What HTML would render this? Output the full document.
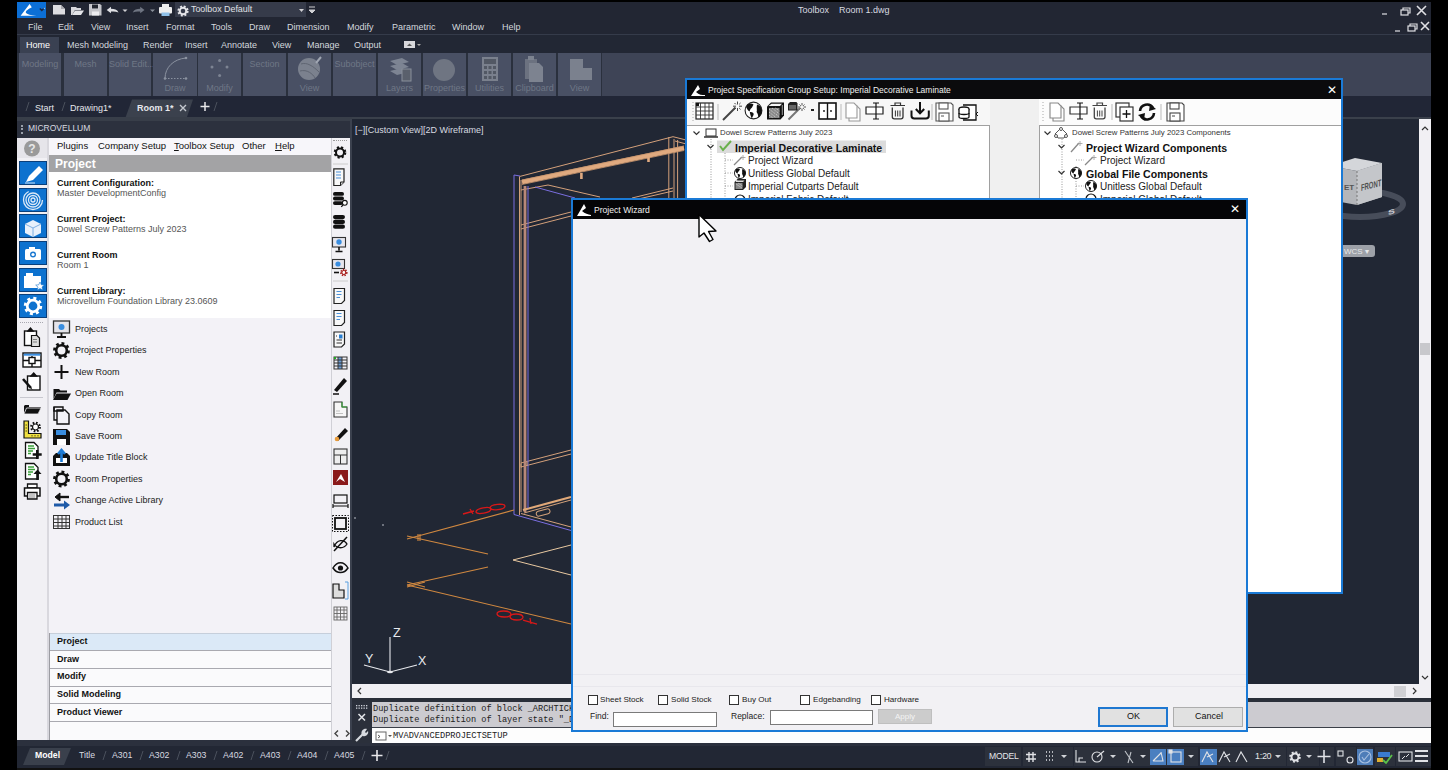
<!DOCTYPE html>
<html><head><meta charset="utf-8">
<style>
*{margin:0;padding:0;box-sizing:border-box}
html,body{width:1448px;height:770px;overflow:hidden;background:#000;font-family:"Liberation Sans",sans-serif}
.a{position:absolute}
.t{position:absolute;white-space:nowrap;line-height:1}
#app{position:absolute;left:17px;top:2px;width:1414px;height:767px;background:#222633;overflow:hidden}
.menu .t{color:#d4d8de;font-size:9px;top:23px}
.rtab .t{color:#d4d8de;font-size:9px;top:41px}
.rp{position:absolute;top:53px;height:43px;background:#495064}
.rp .t{color:#6f7786;font-size:9px;width:100%;text-align:center}
.dt .t{color:#e6e8ec;font-size:9px;top:104px}

.bb{left:19px;width:28px;height:24px;background:#0d72cf;border:1px solid #0a3f7a}
.pm .t{top:141px;font-size:9.5px;color:#111}
.cur .t{left:57px;font-size:9px}
.cur .b{font-weight:bold;color:#111}
.cur .g{color:#555}
.li .t{left:75px;font-size:9px;color:#222}
.acl{left:49px;width:282px;height:1px;background:#a9a9b0}
.ac .t{left:57px;font-size:9px;font-weight:bold;color:#111}

.tr .s{font-size:7.8px;color:#333}
.tr .bld{font-size:10.6px;font-weight:bold;color:#111}
.tr .n{font-size:10px;color:#222}
.ck .t{top:696px;font-size:8.1px;color:#222}
.cb{top:695px;width:10px;height:10px;background:#fff;border:1px solid #333}
.stt .t{top:751px;font-size:8.7px;color:#d8dbe0}
</style></head><body>
<div id="app"></div>
<!-- title row -->
<div class="a" style="left:17px;top:2px;width:1414px;height:16px;background:#222633"></div>
<div class="a" style="left:17px;top:2px;width:29px;height:16px;background:#0c6fd6"></div>
<!-- menu row -->
<div class="a menu" style="left:17px;top:18px;width:1414px;height:17px;background:#222633;border-bottom:1px solid #353b4a"></div>
<div class="menu">
<span class="t" style="left:28px">File</span>
<span class="t" style="left:58px">Edit</span>
<span class="t" style="left:91px">View</span>
<span class="t" style="left:126px">Insert</span>
<span class="t" style="left:166px">Format</span>
<span class="t" style="left:211px">Tools</span>
<span class="t" style="left:249px">Draw</span>
<span class="t" style="left:287px">Dimension</span>
<span class="t" style="left:347px">Modify</span>
<span class="t" style="left:392px">Parametric</span>
<span class="t" style="left:452px">Window</span>
<span class="t" style="left:502px">Help</span>
</div>
<!-- ribbon tabs -->
<div class="a" style="left:17px;top:35px;width:1414px;height:18px;background:#222734"></div>
<div class="a" style="left:20px;top:37px;width:39px;height:16px;background:#3a4152"></div>
<div class="rtab">
<span class="t" style="left:26px;color:#fff">Home</span>
<span class="t" style="left:67px">Mesh Modeling</span>
<span class="t" style="left:143px">Render</span>
<span class="t" style="left:185px">Insert</span>
<span class="t" style="left:221px">Annotate</span>
<span class="t" style="left:272px">View</span>
<span class="t" style="left:307px">Manage</span>
<span class="t" style="left:354px">Output</span>
</div>
<!-- ribbon panels -->
<div class="a" style="left:17px;top:53px;width:1414px;height:43px;background:#2a303d"></div>
<div class="a" style="left:602px;top:53px;width:829px;height:43px;background:#3e4456"></div>
<div class="rp" style="left:19px;width:42px"><span class="t" style="top:7px">Modeling</span></div>
<div class="rp" style="left:64px;width:43px"><span class="t" style="top:7px">Mesh</span></div>
<div class="rp" style="left:109px;width:42px"><span class="t" style="top:7px">Solid Edit...</span></div>
<div class="rp" style="left:153px;width:44px"><span class="t" style="top:31px">Draw</span></div>
<div class="rp" style="left:198px;width:43px"><span class="t" style="top:31px">Modify</span></div>
<div class="rp" style="left:243px;width:43px"><span class="t" style="top:7px">Section</span></div>
<div class="rp" style="left:288px;width:43px"><span class="t" style="top:31px">View</span></div>
<div class="rp" style="left:333px;width:43px"><span class="t" style="top:7px">Subobject</span></div>
<div class="rp" style="left:378px;width:43px"><span class="t" style="top:31px">Layers</span></div>
<div class="rp" style="left:423px;width:43px"><span class="t" style="top:31px">Properties</span></div>
<div class="rp" style="left:468px;width:43px"><span class="t" style="top:31px">Utilities</span></div>
<div class="rp" style="left:513px;width:43px"><span class="t" style="top:31px">Clipboard</span></div>
<div class="rp" style="left:558px;width:43px"><span class="t" style="top:31px">View</span></div>
<!-- doc tabs -->
<div class="a" style="left:17px;top:96px;width:1414px;height:21px;background:#212636"></div>


<!-- QAT icons -->
<svg class="a" style="left:17px;top:2px" width="300" height="16" viewBox="0 0 300 16">
 <path d="M3.6 13.8 L12.6 2 L14.8 5.3 C11.5 7,8.5 9,8.8 10.5 C10 12.6,14 13.2,19.5 13.8Z" fill="#fff"/>
 <path d="M22.8 6.5 L24.8 8.5 L26.8 6.5" stroke="#1a2a48" stroke-width="1.4" fill="none"/><circle cx="27.3" cy="6.3" r=".6" fill="#cde"/>
 <path d="M36 3 H44 L48 7 V12.5 H36Z" fill="#dcdce0"/><path d="M44 3 V7 H48Z" fill="#a8a8ae"/>
 <path d="M54 5 H59 L60 6 H64 V8 H58 L55 13 H54Z" fill="#d8d8dc"/><path d="M58 8.5 H67 L64 13 H55Z" fill="#e4e4e8"/>
 <path d="M72 2 H83 L84.5 3.5 V13.5 H72Z" fill="#c4c5ca"/><rect x="74.5" y="2" width="7" height="5" fill="#d8d8dc"/><rect x="75" y="2.5" width="6" height="4" fill="#22262f"/><rect x="75" y="9.5" width="7" height="4" fill="#ededf0"/>
 <path d="M89.7 8 L94 4.8 V6.8 C97.5 6.8,100 7.5,101.5 10.5 C99 9.5,97 9.3,94 9.6 V11.3Z" fill="#dfe0e4"/>
 <path d="M105.5 7.5 L108 10 L110.5 7.5Z" fill="#cfcfd3"/>
 <path d="M127.5 8 L123.2 4.8 V6.8 C119.7 6.8,117.2 7.5,115.7 10.5 C118.2 9.5,120.2 9.3,123.2 9.6 V11.3Z" fill="#6f7582"/>
 <path d="M133 7.5 L135.5 10 L138 7.5Z" fill="#8a909a"/>
 <rect x="145" y="2" width="7" height="4" fill="#eee"/><rect x="142" y="5" width="13" height="6.5" rx="1" fill="#eee"/><rect x="144.5" y="10.5" width="8" height="3.5" fill="#8fc0e8"/>
 <rect x="158" y="0" width="131" height="15" fill="#363b4a"/>
 <g transform="translate(166,9)"><circle r="4.3" fill="none" stroke="#e4e4e8" stroke-width="2.6" stroke-dasharray="1.8 1.6"/><circle r="3.3" fill="none" stroke="#e4e4e8" stroke-width="2"/></g>
 <path d="M282 7 L284.5 10 L287 7Z" fill="#d0d0d4"/>
 <path d="M292 5 H298 M292 8 L295 11 L298 8Z" stroke="#d0d0d4" fill="#d0d0d4"/>
</svg>
<span class="t" style="left:191px;top:5px;color:#e0e2e6;font-size:8.9px">Toolbox Default</span>
<span class="t" style="left:798px;top:6px;color:#d8dbe0;font-size:9px">Toolbox&nbsp;&nbsp;&nbsp;&nbsp;Room 1.dwg</span>
<svg class="a" style="left:1375px;top:3px" width="56" height="31" viewBox="0 0 56 31">
 <g stroke="#e0e0e4" fill="none" stroke-width="1.2">
  <path d="M7 11 H12"/><rect x="26" y="7" width="7" height="5"/><path d="M28 7 V5 H35 V10 H33"/>
  <path d="M42 3 L51 12 M51 3 L42 12" stroke-width="1.6"/>
  <path d="M20 28 H25"/><rect x="33" y="23" width="7" height="5"/><path d="M35 23 V21 H42 V26 H40"/>
  <path d="M46 19 L54 27 M54 19 L46 27" stroke-width="1.6"/>
 </g>
</svg>
<svg class="a" style="left:403px;top:40px" width="20" height="10" viewBox="0 0 20 10"><rect x="1" y="1" width="11" height="7" fill="#d8d8dc"/><path d="M4 6 L6.5 3.5 L9 6Z" fill="#555"/><path d="M14 4 L16 6 L18 4Z" fill="#aaa"/></svg>
<!-- ribbon icons -->
<svg class="a" style="left:17px;top:53px" width="600" height="43" viewBox="0 0 600 43">
 <path d="M148 25.5 C148 14, 157 6, 169 5" stroke="#8b92a0" stroke-width="1" fill="none"/><circle cx="169" cy="5" r="1.3" fill="#8b92a0"/><circle cx="148" cy="25.5" r="1.3" fill="#8b92a0"/><path d="M148 25.5 H169" stroke="#8b92a0" stroke-dasharray="1.5 1.5"/><circle cx="169" cy="25.5" r="1.3" fill="#8b92a0"/>
 <g fill="#7d8493"><circle cx="202.6" cy="7.5" r="1.5"/><circle cx="195" cy="14" r="1.5"/><circle cx="210" cy="14" r="1.5"/><circle cx="202.6" cy="22.5" r="1.5"/></g>
 <circle cx="292" cy="16" r="11" fill="#7b818e"/><path d="M284 11 C290 9, 296 13, 302 19 M283 18 C290 16, 296 21, 298 25" stroke="#5f6572" fill="none"/><path d="M299 10 L304 4" stroke="#a0a6b2" stroke-width="2"/>
 <g fill="#7d8493"><path d="M373 8 L385 5 L392 9 L380 12Z"/><path d="M373 13 L385 10 L392 14 L380 17Z"/><path d="M373 18 L385 15 L392 19 L380 22Z"/><rect x="385" y="16" width="9" height="12" fill="#5a606c" stroke="#8a909c"/></g>
 <circle cx="427" cy="17" r="11" fill="#6f7582"/>
 <rect x="465" y="4" width="16" height="24" fill="#7a808d"/><rect x="467" y="6" width="12" height="5" fill="#525864"/><g fill="#525864"><rect x="467" y="13" width="3" height="3"/><rect x="471.5" y="13" width="3" height="3"/><rect x="476" y="13" width="3" height="3"/><rect x="467" y="18" width="3" height="3"/><rect x="471.5" y="18" width="3" height="3"/><rect x="476" y="18" width="3" height="3"/><rect x="467" y="23" width="3" height="3"/><rect x="471.5" y="23" width="3" height="3"/><rect x="476" y="23" width="3" height="3"/></g>
 <path d="M508 6 H520 V26 H508Z" fill="#6c7280"/><path d="M512 10 H522 L526 14 V29 H512Z" fill="#7d8390"/><rect x="511" y="3" width="6" height="4" fill="#7d8390"/>
 <path d="M553 6 H566 V15 H575 V27 H553Z" fill="#7b818e"/>
</svg>
<!-- doc tabs deco -->
<svg class="a" style="left:17px;top:96px" width="220" height="21" viewBox="0 0 220 21">
 <path d="M9 15 L12 6 M45 15 L48 6 M197 15 L200 6" stroke="#4a505c" stroke-width="1"/>
 <path d="M108.7 21 L115 3.5 H176 L170 21Z" fill="#3b414d"/>
 <path d="M163 9 L169 15 M169 9 L163 15" stroke="#c4c8ce" stroke-width="1.4"/>
 <path d="M188 6 V15 M183.5 10.5 H192.5" stroke="#e8e8ea" stroke-width="1.5"/>
</svg>

<div class="dt">
<span class="t" style="left:35px">Start</span>
<span class="t" style="left:70px">Drawing1*</span>
<span class="t" style="left:137px;font-weight:bold">Room 1*</span>
</div>
<!-- left palette header -->
<div class="a" style="left:17px;top:117px;width:335px;height:4px;background:#383e49"></div>
<div class="a" style="left:17px;top:121px;width:334px;height:17px;background:#2c313e"></div>
<span class="t" style="left:28px;top:124px;color:#d8dbe0;font-size:8.5px">MICROVELLUM</span><div class="a" style="left:21px;top:125px;width:2px;height:9px;border-left:2px dotted #9aa0aa"></div>
<!-- viewport -->
<div class="a" style="left:352px;top:119px;width:1079px;height:565px;background:#212734"></div>
<div class="a" style="left:352px;top:117px;width:1079px;height:2px;background:#3a404b"></div><span class="t" style="left:355px;top:126px;color:#d8dbe0;font-size:9px">[−][Custom View][2D Wireframe]</span>

<!-- wireframe -->
<svg class="a" style="left:352px;top:119px" width="1079" height="565" viewBox="352 119 1079 565">
 <g stroke="#d4a07a" stroke-width="1" fill="none">
  <path d="M519.5 176.5 L673 136.7 L690 141"/>
  <path d="M521 190 L548 185 L600 197"/>
  <path d="M668.8 137 V200 M674 139 V200 M677.6 140 V200"/>
  <path d="M519.5 176.5 V515 M521 180 V512"/>
  <path d="M521 225 L571 212 M521 229 L571 216"/>
  <path d="M521 463 L571 450 M521 467 L571 454"/>
  <path d="M632 198 L673 188 M634 200 L673 191"/>
  <path d="M675 141 L690 145"/>
 </g>
 <path d="M522 182 L684 148" stroke="#e0aa80" stroke-width="4.5"/>
 <path d="M522 180 L684 146 M522 184.5 L684 150.5" stroke="#c8946c" stroke-width=".8"/>
 <path d="M581.4 173 V179 M648.5 156 V162" stroke="#e0aa80" stroke-width="2.6"/>
 <path d="M525 186 V512" stroke="#b88878" stroke-width="2.8"/>
 <path d="M523 510 L571 497" stroke="#e0a878" stroke-width="2.2"/>
 <g stroke="#7a6ee0" stroke-width="1" fill="none">
  <path d="M514 175 V514.5 L571 530.5"/>
  <path d="M514 175 L520 176"/>
  <path d="M528 186 V508"/>
  <path d="M535 187 L575 198"/>
 </g>
 <g stroke="#d4a27a" stroke-width="1" fill="none">
  <path d="M521 513.5 L571 527"/>
  <path d="M524 513 L571 500"/>
  <path d="M521 463.5 V467.5 M527 462 V466"/>
 </g>
 <rect x="536" y="510" width="14" height="5" rx="2.5" fill="none" stroke="#d4a27a" stroke-width="1" transform="rotate(-15 543 512)"/>
 <g stroke="#d08840" stroke-width="1.1" fill="none">
  <path d="M407 539 L514 510"/>
  <path d="M407 536 L488 554"/>
  <path d="M407 585 L488 567"/>
  <path d="M407 585 L571 624"/>
  <path d="M407 582 L425 587 M407 587 L425 582 M418 534 V541 M420 534 V541"/>
 </g>
 <g stroke="#e8c8a0" stroke-width="1" fill="none">
  <path d="M513 560 L571 545"/>
  <path d="M513 560 L571 575"/>
 </g>
 <g stroke="#d81818" stroke-width="1.3" fill="none">
  <path d="M463 514 L474 511 M470 509 L473 514"/>
  <path d="M476 512 C476 508,490 506,491 509 C491 513,477 515,476 512Z"/>
  <path d="M490 508 C490 504,505 503,505 506 C505 510,491 511,490 508Z"/>
  <path d="M497 614 C497 610,510 610,511 614 C511 618,498 618,497 614Z"/>
  <path d="M510 617 C510 613,522 613,523 617 C523 621,511 621,510 617Z"/>
  <path d="M523 620 L537 624 M530 618 L531 624"/>
 </g>
 <circle cx="355" cy="518" r=".8" fill="#cfd3da"/><circle cx="383" cy="525" r=".8" fill="#cfd3da"/>
 <!-- UCS -->
 <g stroke="#e8eaee" stroke-width="1.1" fill="none">
  <path d="M390 672 V637"/>
  <path d="M364 665 L390 672 L417 665"/>
 </g>
 <ellipse cx="390" cy="672" rx="3" ry="1.2" fill="#e8eaee"/>
 <text x="393" y="637" fill="#e8eaee" font-family="Liberation Sans" font-size="12.5">Z</text>
 <text x="365" y="663" fill="#e8eaee" font-family="Liberation Sans" font-size="12.5">Y</text>
 <text x="418" y="665" fill="#e8eaee" font-family="Liberation Sans" font-size="12.5">X</text>
 <!-- viewcube -->
 <ellipse cx="1360" cy="204" rx="43" ry="13" fill="none" stroke="#474d5a" stroke-width="6"/>
 <path d="M1330 166 L1357 171 L1382 163 L1382 197 L1357 205 L1330 200Z" fill="#b4b6ba"/>
 <path d="M1357 171 L1382 163 L1382 197 L1357 205Z" fill="#c4c6ca"/>
 <path d="M1330 166 L1355 158 L1382 163 L1357 171Z" fill="#d4d6da"/>
 <path d="M1357 171 V205" stroke="#777" stroke-dasharray="2 2"/>
 <text x="0" y="0" fill="#505050" font-family="Liberation Sans" font-weight="bold" font-size="9.5" transform="translate(1361,191) skewY(-14) scale(0.62,1)">FRONT</text>
 <text x="1344" y="190" fill="#555" font-family="Liberation Sans" font-weight="bold" font-size="8">ET</text>
 <text x="0" y="0" fill="#d0d2d8" font-family="Liberation Sans" font-weight="bold" font-size="8" transform="translate(1388,215) skewY(-15) scale(1.3,0.8)">S</text>
 <rect x="1340" y="245" width="35" height="12" rx="3" fill="#9da1a8"/>
 <text x="1344" y="254" fill="#e6e8ea" font-family="Liberation Sans" font-size="8">WCS ▾</text>
</svg>
<!-- vertical scrollbar -->
<div class="a" style="left:1419px;top:119px;width:12px;height:565px;background:#f1f0f4"></div>
<svg class="a" style="left:1419px;top:119px" width="12" height="565" viewBox="0 0 12 565"><path d="M3 11 L6 8 L9 11" stroke="#333" stroke-width="1.2" fill="none"/><rect x="1" y="224" width="10" height="12" fill="#c8c8cc"/><path d="M3 557 L6 560 L9 557" stroke="#333" stroke-width="1.2" fill="none"/></svg>
<!-- horizontal scrollbar -->
<div class="a" style="left:352px;top:684px;width:1079px;height:14px;background:#f1f0f4"></div>
<svg class="a" style="left:352px;top:684px" width="1079" height="14" viewBox="0 0 1079 14"><path d="M9 4 L6 7 L9 10" stroke="#333" stroke-width="1.2" fill="none"/><rect x="1042" y="2" width="12" height="11" fill="#d0d0d4"/><path d="M1061 4 L1064 7 L1061 10" stroke="#333" stroke-width="1.2" fill="none"/></svg>
<div class="a" style="left:352px;top:698px;width:1079px;height:4px;background:#2a2f39"></div>
<!-- command area -->
<div class="a" style="left:352px;top:702px;width:20px;height:41px;background:#2b303b"></div>
<div class="a" style="left:372px;top:702px;width:1059px;height:25px;background:#cccbd0"></div>
<div class="a" style="left:372px;top:727px;width:1059px;height:1px;background:#3b3f48"></div>
<div class="a" style="left:372px;top:728px;width:1059px;height:15px;background:#fdfdfd"></div>
<span class="t" style="left:373px;top:705px;font-family:'Liberation Mono',monospace;font-size:8.6px;color:#222">Duplicate definition of block _ARCHTICK</span>
<span class="t" style="left:373px;top:716px;font-family:'Liberation Mono',monospace;font-size:8.6px;color:#222">Duplicate definition of layer state "_DEFAULT"</span>
<svg class="a" style="left:352px;top:702px" width="40" height="42" viewBox="0 0 40 42">
 <g fill="#cfd3da"><rect x="4" y="3" width="1.3" height="1.3"/><rect x="6.5" y="3" width="1.3" height="1.3"/><rect x="9" y="3" width="1.3" height="1.3"/><rect x="11.5" y="3" width="1.3" height="1.3"/><rect x="14" y="3" width="1.3" height="1.3"/><rect x="4" y="5.5" width="1.3" height="1.3"/><rect x="6.5" y="5.5" width="1.3" height="1.3"/><rect x="9" y="5.5" width="1.3" height="1.3"/><rect x="11.5" y="5.5" width="1.3" height="1.3"/><rect x="14" y="5.5" width="1.3" height="1.3"/></g>
 <path d="M6.5 12 L13 18.5 M13 12 L6.5 18.5" stroke="#e4e6ea" stroke-width="1.5"/>
 <path d="M4 39 L11 32" stroke="#d8dbe0" stroke-width="2.2"/><path d="M10 33 C8 29,12 26,15 27 L13 30 L14 31 L16 29 C17 32,14 35,11 34" fill="#d8dbe0"/>
 <rect x="24" y="30" width="10" height="8" fill="#fff" stroke="#666" stroke-width="1"/><path d="M26 33 L28 34.5 L26 36" stroke="#333" stroke-width=".8" fill="none"/><path d="M36 33 L38 35 L40 33Z" fill="#555"/>
</svg>
<span class="t" style="left:393px;top:732px;font-family:'Liberation Mono',monospace;font-size:8.7px;color:#222">MVADVANCEDPROJECTSETUP</span>

<!-- left panel -->
<div class="a" style="left:17px;top:138px;width:334px;height:602px;background:#f4f3f7"></div>

<!-- LEFT PANEL DETAILS -->
<div class="a" style="left:17px;top:138px;width:30px;height:20px;background:#e6e5ea"></div>
<svg class="a" style="left:23px;top:140px" width="18" height="17" viewBox="0 0 18 17"><circle cx="9" cy="8.5" r="8" fill="#9a9a9a"/><text x="9" y="13" font-family="Liberation Sans" font-weight="bold" font-size="12" fill="#e8e8e8" text-anchor="middle">?</text></svg>
<div class="a" style="left:47px;top:138px;width:2px;height:602px;background:#d9d8de"></div>
<div class="a" style="left:17px;top:158px;width:30px;height:582px;background:#f1f0f4"></div>
<!-- blue buttons -->
<div class="a bb" style="top:161px"></div>
<div class="a bb" style="top:188px"></div>
<div class="a bb" style="top:214px"></div>
<div class="a bb" style="top:241px"></div>
<div class="a bb" style="top:268px"></div>
<div class="a bb" style="top:294px"></div>
<svg class="a" style="left:19px;top:161px" width="28" height="162" viewBox="0 0 28 162">
 <!-- pen -->
 <path d="M7 21 L10 15 L20 5 L24 9 L14 19 Z" fill="#fff"/><path d="M6 22 L16 22" stroke="#cfe3f7" stroke-width="1"/>
 <!-- spiral -->
 <g fill="none" stroke="#dbe9f7" stroke-width="1.3"><circle cx="14" cy="39" r="2"/><circle cx="14" cy="39" r="4.5"/><circle cx="14" cy="39" r="7"/><circle cx="14" cy="39" r="9.5" stroke-dasharray="40 20"/></g>
 <!-- cube -->
 <path d="M14 59 L22 63 L22 72 L14 76 L6 72 L6 63 Z" fill="#e9f1fb"/><path d="M14 67 L22 63 M14 67 L6 63 M14 67 L14 76" stroke="#7fb0e3" stroke-width="1"/>
 <!-- camera -->
 <rect x="6" y="88" width="16" height="11" rx="1.5" fill="#fff"/><rect x="10" y="86" width="6" height="3" fill="#fff"/><circle cx="14" cy="93.5" r="3" fill="#1b78d0"/><circle cx="14" cy="93.5" r="1.6" fill="#fff"/>
 <!-- folder star -->
 <path d="M5 115 L5 127 L22 127 L22 115 Z" fill="#fff"/><path d="M7 112 L14 112 L14 115 L7 115Z" fill="#fff"/><path d="M21 121 l1.3 2.8 3 .3 -2.3 2 .7 3 -2.7-1.5 -2.7 1.5 .7-3 -2.3-2 3-.3z" fill="#fff" stroke="#1b78d0" stroke-width=".6"/>
 <!-- gear -->
 <g transform="translate(14,145)"><circle r="7.5" fill="none" stroke="#fff" stroke-width="3.4" stroke-dasharray="2.9 3"/><circle r="5.8" fill="none" stroke="#fff" stroke-width="2.8"/></g>
</svg>
<div class="a" style="left:20px;top:322px;width:23px;height:0;border-top:1px dotted #a8a8b0"></div>
<!-- left strip lower icons -->
<svg class="a" style="left:20px;top:326px" width="26" height="176" viewBox="0 0 26 176">
 <g fill="none" stroke="#111" stroke-width="1.4">
  <rect x="4.5" y="5" width="12" height="14.5" fill="#fff"/><path d="M8 5 L10.5 2 L13 5Z" fill="#111"/><path d="M11.5 9.5 H17 L19.5 12 V20.5 H11.5Z" fill="#ddd" stroke-width="1.2"/><path d="M13 13.5 H17 M13 16 H17" stroke="#555" stroke-width=".7"/>
  <rect x="3" y="27" width="18" height="14" fill="#fff"/><rect x="3.7" y="27.7" width="16.6" height="2" fill="#3a8ee0" stroke="none"/><path d="M3 34.5 H9 M15 34.5 H21 M12 30 V41"/><rect x="9" y="31.5" width="6" height="6" fill="#fff"/>
  <rect x="7.5" y="50" width="12.5" height="14" fill="#fff"/><path d="M11 50 L13.7 47 L16.4 50Z" fill="#111"/><path d="M3 53 L11 62" stroke-width="2.6"/><path d="M10.5 61.5 L12 63.5" stroke-width="1"/>
 </g>
 <g transform="translate(0,-5)">
 <path d="M4 85 L4 93 L18 93 L21 86 L9 86 L9 84 L5 84Z" fill="#111"/><path d="M6.5 87 H21 L18 93 H4Z" fill="#111" stroke="#f1f0f4" stroke-width=".8"/>
 <path d="M4 100 V117 H21 V112.5 H8.5 V100Z" fill="#f0e040" stroke="#111" stroke-width="1.2"/><path d="M5.5 104 H7 M5.5 107 H7 M5.5 110 H7 M12 115.5 V114 M15 115.5 V114 M18 115.5 V114" stroke="#111" stroke-width=".7"/>
 <g transform="translate(15.5,106)"><circle r="4.2" fill="#fff" stroke="#111" stroke-width="2.4" stroke-dasharray="1.6 1.7"/><circle r="3" fill="#fff" stroke="#111" stroke-width="1.2"/></g>
 <path d="M5.5 121.5 H14 L18 125.5 V137 H5.5Z" fill="#fff" stroke="#111" stroke-width="1.3"/><path d="M8 125 H14 M8 127.5 H15 M8 130 H13 M8 132.5 H11" stroke="#3aa03a" stroke-width="1.3"/>
 <path d="M17.2 129 V138 M12.7 133.5 H21.7" stroke="#111" stroke-width="2.4"/>
 <path d="M5.5 142.5 H14 L18 146.5 V158 H5.5Z" fill="#fff" stroke="#111" stroke-width="1.3"/><path d="M8 146 H14 M8 148.5 H15 M8 151 H13 M8 153.5 H11" stroke="#3aa03a" stroke-width="1.3"/>
 <path d="M17.5 159 V152" stroke="#111" stroke-width="2.6"/><path d="M13.5 153 L17.5 148.5 L21.5 153Z" fill="#111"/>
 <path d="M7.5 163 H17 V167 H7.5Z" fill="#fff" stroke="#111" stroke-width="1.3"/><path d="M4.5 167 H20 V175 H4.5Z" fill="#fff" stroke="#111" stroke-width="1.5"/><path d="M7.5 171.5 H17 V178 H7.5Z" fill="#eee" stroke="#111" stroke-width="1.3"/><path d="M9 174 H15 M9 176 H15" stroke="#777" stroke-width=".7"/>
 </g>
</svg>
</svg>
<div class="a" style="left:20px;top:397px;width:23px;height:1px;background:#c8c8cf"></div>
<!-- menu row -->
<div class="a" style="left:49px;top:138px;width:282px;height:17px;background:#f7f6fa"></div>
<div class="pm">
<span class="t" style="left:57px">Plugins</span>
<span class="t" style="left:98px">Company Setup</span>
<span class="t" style="left:174px"><u>T</u>oolbox Setup</span>
<span class="t" style="left:242px">Other</span>
<span class="t" style="left:275px"><u>H</u>elp</span>
</div>
<div class="a" style="left:49px;top:155px;width:282px;height:17px;background:#a3a3a5"></div>
<span class="t" style="left:55px;top:158px;color:#fff;font-size:12px;font-weight:bold">Project</span>
<div class="a" style="left:49px;top:172px;width:282px;height:146px;background:#fff"></div>
<div class="cur">
<span class="t b" style="top:179px">Current Configuration:</span><span class="t g" style="top:189px">Master DevelopmentConfig</span>
<span class="t b" style="top:215px">Current Project:</span><span class="t g" style="top:225px">Dowel Screw Patterns July 2023</span>
<span class="t b" style="top:251px">Current Room</span><span class="t g" style="top:261px">Room 1</span>
<span class="t b" style="top:287px">Current Library:</span><span class="t g" style="top:297px">Microvellum Foundation Library 23.0609</span>
</div>
<div class="a" style="left:49px;top:318px;width:282px;height:315px;background:#f3f2f7"></div>
<div class="li">
<span class="t" style="top:325px">Projects</span>
<span class="t" style="top:346px">Project Properties</span>
<span class="t" style="top:368px">New Room</span>
<span class="t" style="top:389px">Open Room</span>
<span class="t" style="top:411px">Copy Room</span>
<span class="t" style="top:432px">Save Room</span>
<span class="t" style="top:453px">Update Title Block</span>
<span class="t" style="top:475px">Room Properties</span>
<span class="t" style="top:496px">Change Active Library</span>
<span class="t" style="top:518px">Product List</span>
</div>
<svg class="a" style="left:52px;top:319px" width="20" height="214" viewBox="0 0 20 214">
 <rect x="1.5" y="2" width="16" height="12" fill="#e4e4ea" stroke="#333" stroke-width="1.3"/><circle cx="9.5" cy="8" r="3" fill="#3a8ee0"/><path d="M9.5 14 L9.5 17 M5 18 L14 18" stroke="#111" stroke-width="1.8"/>
 <g transform="translate(9.5,31.5)"><circle r="6.8" fill="none" stroke="#111" stroke-width="3.2" stroke-dasharray="2.7 2.6"/><circle r="5.3" fill="none" stroke="#111" stroke-width="2.6"/></g>
 <path d="M9.5 46 L9.5 60 M2.5 53 L16.5 53" stroke="#111" stroke-width="2"/>
 <path d="M1.5 70 H7 L8.5 71.5 H15 V73.5 H4.5 L1.5 80Z" fill="#111"/><path d="M4.5 74.5 H19 L15.5 81 H1Z" fill="#111"/>
 <g fill="none" stroke="#111" stroke-width="1.4"><path d="M2 88 L11 88 L11 92 L2 92 Z M5 91 L13 91 L17 95 L17 105 L5 105 Z"/></g><path d="M2 88 L2 101 L5 101" stroke="#111" stroke-width="1.4" fill="none"/>
 <path d="M1 110 L15 110 L18 113 L18 126 L1 126 Z" fill="#111"/><rect x="4" y="111" width="10" height="5" fill="#3a8ee0"/><rect x="5" y="120" width="9" height="6" fill="#fff"/>
 <path d="M1 137 L4 134 L15 134 L18 137 L18 147 L1 147 Z" fill="#111"/><path d="M4 139 L15 139 L15 144 L4 144Z" fill="#fff"/><path d="M9.5 143 L9.5 132 M6 135 L9.5 131 L13 135" stroke="#1e7bd4" stroke-width="2.6" fill="none"/>
 <g transform="translate(9.5,160)"><circle r="6.8" fill="none" stroke="#111" stroke-width="3.2" stroke-dasharray="2.7 2.6"/><circle r="5.3" fill="none" stroke="#111" stroke-width="2.6"/></g>
 <path d="M17 178 H5" stroke="#111" stroke-width="2.4"/><path d="M8 174 L3 178 L8 182Z" fill="#111" stroke="#111" stroke-width="1"/><path d="M2 186 H14" stroke="#1e5aa8" stroke-width="3"/><path d="M12 181.5 L18 186 L12 190.5Z" fill="#1e5aa8"/>
 <g stroke="#333" stroke-width="1" fill="none"><rect x="1.5" y="196.5" width="16" height="13"/><path d="M1.5 200 H17.5 M1.5 203.5 H17.5 M1.5 207 H17.5 M6 196.5 V209.5 M10 196.5 V209.5 M14 196.5 V209.5"/></g>
</svg>
<!-- right strip -->
<div class="a" style="left:331px;top:138px;width:19px;height:602px;background:#f2f1f5;border-left:1px solid #d0d0d6"></div>
<div class="a" style="left:333px;top:140px;width:14px;height:0;border-top:1px dotted #999"></div>
<svg class="a" style="left:331px;top:140px" width="19" height="490" viewBox="0 0 19 490">
 <g transform="translate(9,12.5)"><circle r="5" fill="none" stroke="#111" stroke-width="2.6" stroke-dasharray="2 2"/><circle r="4" fill="none" stroke="#111" stroke-width="2"/></g>
 <path d="M2 24 H17" stroke="#ccc"/>
 <path d="M2.8 28.8 H13 V42 L9.5 45.5 H2.8Z" fill="#f8f8f8" stroke="#222" stroke-width="1.2"/><path d="M13 42 H9.5 V45.5" fill="#ccc" stroke="#222" stroke-width="1"/><path d="M5 32 H10 M5 35 H10 M5 38 H10" stroke="#4a90d9" stroke-width="1"/>
 <g fill="#111"><rect x="2" y="52" width="11" height="3.8" rx="1.9"/><rect x="2" y="56.6" width="11" height="3.8" rx="1.9"/><rect x="2" y="61.2" width="10" height="3.8" rx="1.9"/></g><circle cx="13.8" cy="62.8" r="2.4" fill="#fff" stroke="#111" stroke-width="1.1"/><path d="M12.2 64.6 L10.3 66.8" stroke="#111" stroke-width="1.3"/>
 <g fill="#111"><rect x="2" y="75" width="12" height="4.2" rx="2.1"/><rect x="2" y="79.8" width="12" height="4.2" rx="2.1"/><rect x="2" y="84.6" width="12" height="4.2" rx="2.1"/></g>
 <rect x="1.5" y="97.5" width="13" height="9.5" fill="#e6e6ee" stroke="#333" stroke-width="1.1"/><circle cx="8" cy="102" r="2.7" fill="#3a8ee0"/><path d="M8 107 V110.5 M4.5 111.5 H11.5" stroke="#111" stroke-width="1.6"/>
 <rect x="1.5" y="119.5" width="12" height="9" fill="#e6e6ee" stroke="#333" stroke-width="1.1"/><circle cx="7" cy="124" r="2.6" fill="#3a8ee0"/><path d="M3 132.5 H8" stroke="#111" stroke-width="1.6"/>
 <g transform="translate(12.8,132.5)"><circle r="2.8" fill="#fff" stroke="#a82020" stroke-width="2" stroke-dasharray="1.3 1.1"/><circle r="2" fill="none" stroke="#a82020" stroke-width="1.2"/></g>
 <path d="M2 141 H17" stroke="#ccc"/>
 <g fill="#f8f8f8" stroke="#222" stroke-width="1.2"><path d="M3 148.5 H13.5 V160.5 L10.5 163.5 H3Z"/><path d="M3 170.5 H13.5 V182.5 L10.5 185.5 H3Z"/><path d="M3 192 H13.5 V204 L10.5 207 H3Z"/></g>
 <path d="M5.5 151.5 H10.5 M5.5 154.5 H10.5 M5.5 157.5 H9 M5.5 173.5 H10.5 M5.5 176.5 H10.5 M5.5 179.5 H9" stroke="#4a90d9"/><path d="M8 194.5 H11.5 V198.5 H8Z" fill="#2a7ed0"/><path d="M5.5 195.5 V196.5 M5.5 200 H11 M5.5 203 H11" stroke="#333"/>
 <g transform="translate(0,3)"><rect x="7" y="214" width="4" height="12" fill="#6a9ad0"/><g stroke="#333" stroke-width="1" fill="none"><rect x="3" y="214" width="13" height="12"/><path d="M3 217 H16 M3 220 H16 M3 223 H16 M7 214 V226 M11 214 V226"/></g><rect x="3" y="214" width="2" height="2" fill="#2a2"/></g>
 <g transform="translate(0,2)"><path d="M3 248 L13 236 L16 239 L6 250Z" fill="#111"/><path d="M2 252 H8" stroke="#111" stroke-width="1.5"/></g>
 <path d="M3 262 L11 262 L11 267 L16 267 L16 277 L3 277Z" fill="#f6f6f6" stroke="#333" stroke-width="1.1"/><path d="M11 262 V267 H16" stroke="#3a3" stroke-width="1" fill="none"/><path d="M5 271 H9 M5 273.5 H12" stroke="#aaa" stroke-width=".7"/>
 <path d="M4 299 L14 288 L17 291 L7 301Z" fill="#111"/><circle cx="6" cy="299" r="2.3" fill="#e69a3a"/>
 <g stroke="#333" stroke-width="1.1" fill="#eee"><rect x="3" y="309" width="13" height="15"/></g><path d="M3 315 H16 M9.5 315 V324" stroke="#333"/>
 <rect x="2" y="330" width="15" height="15" fill="#8a1a1a"/><path d="M5 342 L10 334 L14 342 L9 339Z" fill="#fff"/>
 <g transform="translate(0,3)"><g fill="none" stroke="#111" stroke-width="1.2"><rect x="3" y="352" width="13" height="8"/><path d="M2 363 H17 M2 361 V365 M17 361 V365"/></g></g>
 <g transform="translate(0,4)"><g fill="none" stroke="#111"><rect x="4" y="374" width="11" height="11" stroke-width="1.8"/><rect x="1.5" y="371.5" width="16" height="16" stroke-dasharray="1.5 1.5"/></g></g>
 <path d="M3 407 C6 399, 13 399, 16 404 C13 409, 6 409, 3 404Z" fill="none" stroke="#111" stroke-width="1.3"/><path d="M3 411 L16 397" stroke="#111" stroke-width="1.5"/>
 <path d="M2 428 C6 421, 13 421, 17 428 C13 434, 6 434, 2 428Z" fill="none" stroke="#111" stroke-width="1.5"/><circle cx="9.5" cy="428" r="2.6" fill="#111"/>
 <path d="M2 444 L8 444 L8 450 L13 450 L13 458 L2 458Z" fill="#ddd" stroke="#111" stroke-width="1.2"/><path d="M14 442 H17 V459 H14" stroke="#5aa0e0" fill="none"/>
 <g stroke="#666" stroke-width=".9" fill="none"><rect x="3" y="467" width="13" height="13"/><path d="M3 470 H16 M3 473.5 H16 M3 477 H16 M6 467 V480 M9.5 467 V480 M13 467 V480"/></g>
</svg>
<div class="a" style="left:350px;top:119px;width:2px;height:624px;background:#3b414e"></div>
<!-- accordion -->
<div class="a" style="left:49px;top:633px;width:282px;height:107px;background:#fafafc"></div>
<div class="a" style="left:49px;top:633px;width:282px;height:18px;background:#dbe9f7;border-top:1px solid #c6cfdb"></div>
<div class="a acl" style="top:650px"></div><div class="a acl" style="top:668px"></div><div class="a acl" style="top:686px"></div><div class="a acl" style="top:703px"></div><div class="a acl" style="top:721px"></div>
<div class="a" style="left:49px;top:633px;width:1px;height:107px;background:#9c9ca2"></div>
<div class="ac">
<span class="t" style="top:637px">Project</span>
<span class="t" style="top:655px">Draw</span>
<span class="t" style="top:672px">Modify</span>
<span class="t" style="top:690px">Solid Modeling</span>
<span class="t" style="top:708px">Product Viewer</span>
</div>
<svg class="a" style="left:333px;top:729px" width="18" height="9" viewBox="0 0 18 9"><path d="M5 1.5 L2 4.5 L5 7.5 M13 1.5 L16 4.5 L13 7.5" stroke="#444" stroke-width="1.4" fill="none"/></svg>


<!-- SPEC DIALOG -->
<div class="a" style="left:685px;top:78px;width:658px;height:516px;background:#1a7ad6"></div>
<div class="a" style="left:687px;top:80px;width:654px;height:19px;background:#0b0b0d"></div>
<svg class="a" style="left:690px;top:83px" width="16" height="14" viewBox="0 0 16 14"><path d="M1 13 L8 2 L10 6 L6 9 C9 12, 12 12, 15 12 L15 13 Z" fill="#fff"/></svg>
<span class="t" style="left:708px;top:86px;color:#f0f0f0;font-size:8.5px">Project Specification Group Setup: Imperial Decorative Laminate</span>
<span class="t" style="left:1327px;top:84px;color:#fff;font-size:12px">✕</span>
<div class="a" style="left:687px;top:99px;width:654px;height:493px;background:#f0f0f0"></div>
<div class="a" style="left:687px;top:99px;width:303px;height:26px;background:#f7f7f7"></div>
<div class="a" style="left:687px;top:125px;width:303px;height:467px;background:#fff;border-top:1px solid #a0a0a0;border-right:1px solid #a0a0a0"></div>
<div class="a" style="left:1039px;top:125px;width:302px;height:467px;background:#fff;border-top:1px solid #a0a0a0;border-left:1px solid #a0a0a0"></div>
<div class="a" style="left:1039px;top:99px;width:302px;height:26px;background:#fcfcfc"></div>
<!-- toolbar icons left -->
<svg class="a" style="left:690px;top:100px" width="300" height="24" viewBox="0 0 300 24">
 <path d="M3 2 V22" stroke="#aaa" stroke-dasharray="1 2"/>
 <g stroke="#222" stroke-width="1.2" fill="#fff"><rect x="6" y="3" width="17" height="16"/></g><path d="M6 7 H23 M6 11 H23 M6 15 H23 M10.5 3 V19 M15 3 V19 M19 3 V19" stroke="#333" stroke-width=".9"/><rect x="6" y="3" width="3" height="3" fill="#111"/>
 <path d="M28 4 V20" stroke="#bbb"/>
 <path d="M33 20 L45.5 7.5" stroke="#444" stroke-width="2"/><path d="M47.5 1.5 V4.5 M47.5 8 V11 M43 6.2 H46 M49 6.2 H52 M44.5 3 L45.8 4.3 M50.5 3 L49.2 4.3 M44.5 9.4 L45.8 8.1 M50.5 9.4 L49.2 8.1" stroke="#444" stroke-width="1"/>
 <circle cx="63.5" cy="10.5" r="8.4" fill="#fff" stroke="#222" stroke-width="1.1"/>
 <path d="M57 5 C59 3.2,62 3,63.5 4.5 L62 7.5 L60.5 9 L59.5 11.5 C58 10.5,57 9,56.2 7.5Z" fill="#111"/>
 <path d="M59.8 12.2 C62 11.8,64 12.8,63.6 14.8 L61.8 18.6 C61 17,60.4 15,59.8 12.2Z" fill="#111"/>
 <path d="M67 4.5 C69.5 5,71.5 7,72 10 C72 13,70.5 16,68.5 17.8 C68.2 15.5,67.8 13.5,66.6 12 C67.4 10,66.2 8,67 4.5Z" fill="#111"/>
 <path d="M77 6.5 L81 2.5 H94 V15.5 L90.5 19.5 H77Z" fill="#111"/><path d="M78.5 6 L81.5 3.8 H92 L90 6Z" fill="#f4f4f4"/><rect x="79" y="8" width="10.5" height="10" fill="#8a8a8a"/>
 <path d="M79 9 L89.5 17 M79 12 L86 17.5 M82 8 L89.5 14 M85.5 8 L89.5 11 M79 15 L83 18" stroke="#ddd" stroke-width=".8" stroke-dasharray="1.2 1"/><path d="M92.3 5 V15" stroke="#bbb" stroke-width=".8"/>
 <path d="M98.5 19.5 L110 8" stroke="#777" stroke-width="2"/><path d="M98 4 L100 2 H106.5 L107.5 3.5 V10.5 H98Z" fill="#222"/><rect x="99" y="5" width="7" height="4.5" fill="#666"/>
 <path d="M112 3 V5.5 M112 8.5 V11 M108 7 H110.5 M113.5 7 H116 M109.5 4.5 L110.8 5.8 M114.5 4.5 L113.2 5.8 M109.5 9.5 L110.8 8.2 M114.5 9.5 L113.2 8.2" stroke="#555" stroke-width="1"/>
 <rect x="121" y="9" width="3" height="2" fill="#222"/>
 <rect x="129" y="3" width="17" height="16" fill="#fff" stroke="#111" stroke-width="1.6"/><path d="M137.5 3 V19" stroke="#111" stroke-width="1.4"/><circle cx="134" cy="11" r=".9" fill="#111"/><circle cx="141" cy="11" r=".9" fill="#111"/>
 <path d="M151 4 V20" stroke="#bbb"/>
 <g fill="#fff" stroke="#999" stroke-width="1.1"><path d="M159 6 H167 L170 9 V21 H159Z"/><path d="M156 3 H164 L167 6 V18 H156Z"/></g>
 <path d="M176 7 H193 V14 H176Z" fill="#fff" stroke="#222" stroke-width="1.2"/><path d="M186 3 V19 M183 3 H189 M183 19 H189" stroke="#111" stroke-width="1.2"/>
 <path d="M200.5 5.5 H215 M205 5.5 V3 H210.5 V5.5" stroke="#333" stroke-width="1.2" fill="none"/><path d="M202.3 7.5 V16.8 Q202.3 18.8 204.3 18.8 H211 Q213 18.8 213 16.8 V7.5" stroke="#333" stroke-width="1.3" fill="none"/><path d="M205.4 10.5 V16.5 M207.7 10.5 V16.5 M210 10.5 V16.5" stroke="#333" stroke-width="1"/>
 <path d="M221.5 10.5 V15.8 Q221.5 18.6 224.3 18.6 H236 Q238.8 18.6 238.8 15.8 V10.5" stroke="#111" stroke-width="2" fill="none"/><path d="M230 2 V13" stroke="#111" stroke-width="2"/><path d="M225.8 9 L230 13.3 L234.2 9" stroke="#111" stroke-width="2" fill="none"/>
 <path d="M242 4 V20" stroke="#bbb"/>
 <g fill="#fff" stroke="#555" stroke-width="1.1"><path d="M246 3 H261 L263 5 V21 H246Z"/><rect x="249" y="3" width="9" height="6"/><rect x="249" y="13" width="10" height="8"/></g><path d="M251 16 H254" stroke="#555"/>
 <g fill="#fff" stroke="#111" stroke-width="1.3"><path d="M273 5 H286 V20 H273"/><ellipse cx="274" cy="9" rx="5" ry="2"/><path d="M269 9 V17 C269 19,279 19,279 17 V9"/><path d="M269 13 C269 15,279 15,279 13"/></g><path d="M288 12 L286 14 L288 16" stroke="#111" fill="none"/>
</svg>
<!-- toolbar icons right -->
<svg class="a" style="left:1040px;top:100px" width="150" height="24" viewBox="0 0 150 24">
 <path d="M3 2 V22" stroke="#aaa" stroke-dasharray="1 2"/>
 <g fill="#fff" stroke="#888" stroke-width="1.1"><path d="M13 6 H21 L24 9 V21 H13Z"/><path d="M10 3 H18 L21 6 V18 H10Z"/></g>
 <path d="M30 7 H47 V14 H30Z" fill="#fff" stroke="#333" stroke-width="1.2"/><path d="M40 3 V19 M37 3 H43 M37 19 H43" stroke="#111" stroke-width="1.2"/>
 <path d="M52.5 5.5 H67 M57 5.5 V3 H62.5 V5.5" stroke="#444" stroke-width="1.2" fill="none"/><path d="M54.3 7.5 V16.8 Q54.3 18.8 56.3 18.8 H63 Q65 18.8 65 16.8 V7.5" stroke="#444" stroke-width="1.3" fill="none"/><path d="M57.4 10.5 V16.5 M59.7 10.5 V16.5 M62 10.5 V16.5" stroke="#444" stroke-width="1"/>
 <path d="M72 4 V20" stroke="#bbb"/>
 <g fill="#fff" stroke="#333" stroke-width="1.2"><rect x="76" y="3" width="13" height="14"/><rect x="80" y="7" width="13" height="14"/></g><path d="M86.5 10 V18 M82.5 14 H90.5" stroke="#111" stroke-width="1.3"/>
 <g fill="none" stroke="#111" stroke-width="2.6"><path d="M100 11 A7 7 0 0 1 113 8"/><path d="M114 13 A7 7 0 0 1 101 16"/></g><path d="M110 4 L116 9 L109 11Z M104 20 L98 15 L105 13Z" fill="#111"/>
 <path d="M121 4 V20" stroke="#bbb"/>
 <g fill="#fff" stroke="#444" stroke-width="1.1"><path d="M127 3 H142 L144 5 V21 H127Z"/><rect x="130" y="3" width="9" height="6"/><rect x="130" y="13" width="10" height="8"/></g><path d="M132 16 H135" stroke="#444"/>
</svg>
<!-- tree left -->
<div class="tr">
<svg class="a" style="left:690px;top:127px" width="200" height="75" viewBox="0 0 200 75">
 <path d="M3.5 4.5 L6.5 7.5 L9.5 4.5" stroke="#333" stroke-width="1.2" fill="none"/>
 <rect x="16" y="2" width="10" height="7" fill="#fff" stroke="#333" stroke-width="1"/><path d="M14 10 H28" stroke="#333" stroke-width="1.5"/>
 <path d="M21 12 V75 M35 26 V75" stroke="#999" stroke-dasharray="1 1.5"/>
 <path d="M17.5 18 L20.5 21 L23.5 18" stroke="#333" stroke-width="1.2" fill="none"/>
 <rect x="27" y="13.5" width="169" height="12.5" fill="#dcdcdc"/>
 <path d="M30 19 L33 23 L41 14" stroke="#6ab04c" stroke-width="2" fill="none"/>
 <path d="M35 33 H43 M35 46 H43 M35 59 H43 M35 72 H43" stroke="#999" stroke-dasharray="1 1.5"/>
 <path d="M44 38 L52 30" stroke="#888" stroke-width="1.3"/><path d="M53 28 V33 M50.5 30.5 H55.5" stroke="#999" stroke-width=".8"/>
 <g transform="translate(50,46) scale(0.66) translate(-63.5,-10.5)"><circle cx="63.5" cy="10.5" r="8.4" fill="#fff" stroke="#222" stroke-width="1.5"/><path d="M57 5 C59 3.2,62 3,63.5 4.5 L62 7.5 L60.5 9 L59.5 11.5 C58 10.5,57 9,56.2 7.5Z M59.8 12.2 C62 11.8,64 12.8,63.6 14.8 L61.8 18.6 C61 17,60.4 15,59.8 12.2Z M67 4.5 C69.5 5,71.5 7,72 10 C72 13,70.5 16,68.5 17.8 C68.2 15.5,67.8 13.5,66.6 12 C67.4 10,66.2 8,67 4.5Z" fill="#111"/></g>
 <path d="M44.5 55 L47.5 52 H56 V60 L53 63 H44.5Z" fill="#222"/><path d="M45.8 52.8 L47.8 53.5 H54.5 L53 55 H45.8Z" fill="#ddd"/><rect x="45.5" y="56" width="7" height="6" fill="#888"/><path d="M46 57 L52 61 M48 56 L52.5 59" stroke="#ccc" stroke-width=".6"/>
 <circle cx="50" cy="73" r="5" fill="none" stroke="#111" stroke-width="1.2"/>
</svg>
<span class="t s" style="left:720px;top:129px">Dowel Screw Patterns July 2023</span>
<span class="t bld" style="left:735px;top:143px">Imperial Decorative Laminate</span>
<span class="t n" style="left:748px;top:156px">Project Wizard</span>
<span class="t n" style="left:748px;top:169px">Unitless Global Default</span>
<span class="t n" style="left:748px;top:182px">Imperial Cutparts Default</span>
<span class="t n" style="left:748px;top:195px">Imperial Fabric Default</span>
</div>
<!-- tree right -->
<div class="tr">
<svg class="a" style="left:1041px;top:127px" width="200" height="75" viewBox="0 0 200 75">
 <path d="M3.5 4.5 L6.5 7.5 L9.5 4.5" stroke="#333" stroke-width="1.2" fill="none"/>
 <path d="M20 1 L26 7 L23 11 H17 L14 7Z" fill="none" stroke="#555" stroke-width="1"/><circle cx="20" cy="2" r="1.5" fill="#fff" stroke="#555"/><circle cx="15" cy="9" r="1.5" fill="#fff" stroke="#555"/><circle cx="25" cy="9" r="1.5" fill="#fff" stroke="#555"/>
 <path d="M21 12 V75 M35 39 V75" stroke="#999" stroke-dasharray="1 1.5"/>
 <path d="M17.5 18 L20.5 21 L23.5 18" stroke="#333" stroke-width="1.2" fill="none"/>
 <path d="M17.5 44 L20.5 47 L23.5 44" stroke="#333" stroke-width="1.2" fill="none"/>
 <path d="M30 25 L38 16" stroke="#888" stroke-width="1.3"/><path d="M39 14 V19 M36.5 16.5 H41.5" stroke="#999" stroke-width=".8"/>
 <path d="M35 33 H43 M35 59 H43" stroke="#999" stroke-dasharray="1 1.5"/>
 <path d="M44 38 L52 30" stroke="#888" stroke-width="1.3"/><path d="M53 28 V33 M50.5 30.5 H55.5" stroke="#999" stroke-width=".8"/>
 <g transform="translate(35,46) scale(0.66) translate(-63.5,-10.5)"><circle cx="63.5" cy="10.5" r="8.4" fill="#fff" stroke="#222" stroke-width="1.5"/><path d="M57 5 C59 3.2,62 3,63.5 4.5 L62 7.5 L60.5 9 L59.5 11.5 C58 10.5,57 9,56.2 7.5Z M59.8 12.2 C62 11.8,64 12.8,63.6 14.8 L61.8 18.6 C61 17,60.4 15,59.8 12.2Z M67 4.5 C69.5 5,71.5 7,72 10 C72 13,70.5 16,68.5 17.8 C68.2 15.5,67.8 13.5,66.6 12 C67.4 10,66.2 8,67 4.5Z" fill="#111"/></g>
 <g transform="translate(50,59) scale(0.66) translate(-63.5,-10.5)"><circle cx="63.5" cy="10.5" r="8.4" fill="#fff" stroke="#222" stroke-width="1.5"/><path d="M57 5 C59 3.2,62 3,63.5 4.5 L62 7.5 L60.5 9 L59.5 11.5 C58 10.5,57 9,56.2 7.5Z M59.8 12.2 C62 11.8,64 12.8,63.6 14.8 L61.8 18.6 C61 17,60.4 15,59.8 12.2Z M67 4.5 C69.5 5,71.5 7,72 10 C72 13,70.5 16,68.5 17.8 C68.2 15.5,67.8 13.5,66.6 12 C67.4 10,66.2 8,67 4.5Z" fill="#111"/></g>
 <circle cx="50" cy="72" r="5" fill="none" stroke="#111" stroke-width="1.2"/>
</svg>
<span class="t s" style="left:1072px;top:129px">Dowel Screw Patterns July 2023 Components</span>
<span class="t bld" style="left:1086px;top:143px">Project Wizard Components</span>
<span class="t n" style="left:1100px;top:156px">Project Wizard</span>
<span class="t bld" style="left:1086px;top:169px">Global File Components</span>
<span class="t n" style="left:1100px;top:182px">Unitless Global Default</span>
<span class="t n" style="left:1100px;top:195px">Imperial Global Default</span>
</div>

<!-- WIZARD DIALOG -->
<div class="a" style="left:571px;top:198px;width:677px;height:534px;background:#1a7ad6"></div>
<div class="a" style="left:573px;top:200px;width:673px;height:19px;background:#050507"></div>
<svg class="a" style="left:576px;top:202px" width="16" height="15" viewBox="0 0 16 15"><path d="M1 14 L8 2 L10 6 L6 9 C9 12, 12 12, 15 13 L15 14 Z" fill="#fff"/></svg>
<span class="t" style="left:594px;top:206px;color:#f0f0f0;font-size:8.6px">Project Wizard</span>
<span class="t" style="left:1230px;top:203px;color:#fff;font-size:12px">✕</span>
<div class="a" style="left:573px;top:219px;width:673px;height:511px;background:#f2f1f4"></div>
<div class="a" style="left:573px;top:674px;width:673px;height:1px;background:#e8e7ec"></div>
<div class="a" style="left:573px;top:686px;width:673px;height:1px;background:#e8e7ec"></div>
<div class="ck">
<span class="a cb" style="left:588px"></span><span class="t" style="left:600px">Sheet Stock</span>
<span class="a cb" style="left:658px"></span><span class="t" style="left:671px">Solid Stock</span>
<span class="a cb" style="left:729px"></span><span class="t" style="left:742px">Buy Out</span>
<span class="a cb" style="left:800px"></span><span class="t" style="left:813px">Edgebanding</span>
<span class="a cb" style="left:871px"></span><span class="t" style="left:884px">Hardware</span>
</div>
<span class="t" style="left:590px;top:712px;font-size:8.5px;color:#222">Find:</span>
<div class="a" style="left:613px;top:712px;width:104px;height:15px;background:#fff;border:1px solid #7a7a7a"></div>
<span class="t" style="left:731px;top:712px;font-size:8.5px;color:#222">Replace:</span>
<div class="a" style="left:770px;top:710px;width:103px;height:15px;background:#fff;border:1px solid #7a7a7a"></div>
<div class="a" style="left:878px;top:709px;width:54px;height:15px;background:#cccccc;border:1px solid #bfbfbf"></div>
<span class="t" style="left:895px;top:713px;font-size:8px;color:#f4f4f4">Apply</span>
<div class="a" style="left:1098px;top:707px;width:70px;height:20px;background:#e1e1e1;border:2px solid #1f78d1"></div>
<span class="t" style="left:1127px;top:712px;font-size:9px;color:#111">OK</span>
<div class="a" style="left:1173px;top:707px;width:70px;height:20px;background:#e1e1e1;border:1px solid #adadad"></div>
<span class="t" style="left:1195px;top:712px;font-size:9px;color:#111">Cancel</span>

<!-- status bar -->
<div class="a" style="left:17px;top:740px;width:335px;height:3px;background:#2b303d"></div><div class="a" style="left:17px;top:743px;width:1414px;height:26px;background:#222734"></div><div class="a" style="left:17px;top:743px;width:1414px;height:3px;background:#2b303d"></div>

<div class="a" style="left:17px;top:768px;width:1414px;height:2px;background:#111"></div>
<svg class="a" style="left:17px;top:741px" width="1414" height="27" viewBox="17 741 1414 27">
 <path d="M23 765 L30 748 H71 L64 765Z" fill="#3a404c"/>
 <g stroke="#4a505c" stroke-width="1"><path d="M103 760 L106 751 M140 760 L143 751 M177 760 L180 751 M214 760 L217 751 M251 760 L254 751 M288 760 L291 751 M325 760 L328 751 M362 760 L365 751 M386 760 L389 751"/></g>
 <path d="M377 750 V761 M371.5 755.5 H382.5" stroke="#e8e8ea" stroke-width="1.6"/>
 <!-- right status -->
 <rect x="985" y="747" width="36" height="19" fill="#2c313c"/>
 <rect x="1023" y="747" width="50" height="19" fill="#2c313c"/>
 <rect x="1074" y="747" width="78" height="19" fill="#2c313c"/>
 <rect x="1152" y="747" width="46" height="19" fill="#2c313c"/>
 <rect x="1200" y="747" width="86" height="19" fill="#2c313c"/>
 <rect x="1287" y="747" width="32" height="19" fill="#2c313c"/>
 <rect x="1320" y="747" width="14" height="19" fill="#2c313c"/>
 <rect x="1336" y="747" width="20" height="19" fill="#2c313c"/>
 <rect x="1357" y="747" width="16" height="19" fill="#2c313c"/>
 <rect x="1375" y="747" width="20" height="19" fill="#2c313c"/>
 <rect x="1396" y="747" width="35" height="19" fill="#2c313c"/>
 <rect x="1150" y="749" width="16" height="16" fill="#4a7fc0"/>
 <rect x="1167" y="749" width="17" height="16" fill="#4a7fc0"/>
 <rect x="1200" y="749" width="17" height="16" fill="#4a7fc0"/>
 <rect x="1357" y="749" width="16" height="16" fill="#4e7db8"/>
 <g stroke="#e0e2e6" stroke-width="1.1" fill="none">
  <path d="M1029 752 V762 M1033 752 V762 M1026 754.5 H1036 M1026 759 H1036" stroke-width="1.4"/>
  <path d="M1046 752 h1 M1049 752 h1 M1052 752 h1 M1046 756 h1 M1049 756 h1 M1052 756 h1 M1046 760 h1 M1049 760 h1 M1052 760 h1" stroke-width="1.3"/>
  <path d="M1076 750 V762 H1086 M1079 762 V758 H1083"/>
  <circle cx="1097" cy="757" r="5"/><path d="M1097 757 L1104 751"/>
  <path d="M1125 751 L1133 763 M1128 763 L1131 752" stroke="#c0c4ca"/>
  <path d="M1153 761 H1163 L1161 752 M1153 761 L1161 753"/>
  <rect x="1171" y="752" width="10" height="10"/><rect x="1169" y="750" width="3" height="3" fill="#e0e2e6"/>
  <path d="M1202 762 L1207 752 L1213 762 M1207 757 L1213 754"/>
  <path d="M1219 762 L1224 752 L1230 762 M1224 757 L1230 754"/>
  <path d="M1236 762 L1241 752 L1247 762"/>
  <path d="M1324 750 V763 M1317.5 756.5 H1330.5" stroke-width="1.6"/>
  <rect x="1338" y="751" width="5" height="5"/><circle cx="1350" cy="760" r="3"/>
  <circle cx="1365" cy="757" r="6" stroke="#a8c0e0"/><path d="M1362 757 L1364 760 L1369 754" stroke="#a8c0e0"/>
  <rect x="1399" y="752" width="13" height="9"/><path d="M1402 759 L1405 756 M1409 754 L1406 757" stroke-width="1"/>
  <path d="M1415 751 H1428 M1415 756 H1428 M1415 761 H1428" stroke-width="1.8"/>
 </g>
 <g transform="translate(1295,757)"><circle r="4.5" fill="none" stroke="#e0e2e6" stroke-width="2.6" stroke-dasharray="1.8 1.7"/><circle r="3.5" fill="none" stroke="#e0e2e6" stroke-width="2"/></g>
 <rect x="1378" y="752" width="12" height="5" fill="#3a7bd0"/><rect x="1377" y="758" width="6" height="4" fill="#e0b030"/><path d="M1383 760 L1386 763 L1392 755" stroke="#5ac04a" stroke-width="1.8" fill="none"/>
 <g fill="#d0d3d8"><path d="M1061 755 L1064 758 L1067 755Z M1110 755 L1113 758 L1116 755Z M1140 755 L1143 758 L1146 755Z M1188 755 L1191 758 L1194 755Z M1275 755 L1278 758 L1281 755Z M1306 755 L1309 758 L1312 755Z"/></g>
</svg>
<div class="stt">
<span class="t" style="left:35px;font-weight:bold;color:#fff">Model</span>
<span class="t" style="left:79px">Title</span>
<span class="t" style="left:112px">A301</span>
<span class="t" style="left:149px">A302</span>
<span class="t" style="left:186px">A303</span>
<span class="t" style="left:223px">A402</span>
<span class="t" style="left:260px">A403</span>
<span class="t" style="left:297px">A404</span>
<span class="t" style="left:334px">A405</span>
</div>
<span class="t" style="left:989px;top:752px;font-size:8.6px;color:#e4e6ea;letter-spacing:-0.2px">MODEL</span>
<span class="t" style="left:1255px;top:752px;font-size:9px;color:#e4e6ea;letter-spacing:-0.3px">1:20</span>

<svg class="a" style="left:690px;top:208px" width="32" height="40" viewBox="690 208 32 40"><path d="M699 214.5 L699 237 L704 233 L709.5 241.5 L713 239.5 L708.5 231.5 L716 231 Z" fill="#fff" stroke="#000" stroke-width="1.4" stroke-linejoin="round"/></svg>
</body></html>
